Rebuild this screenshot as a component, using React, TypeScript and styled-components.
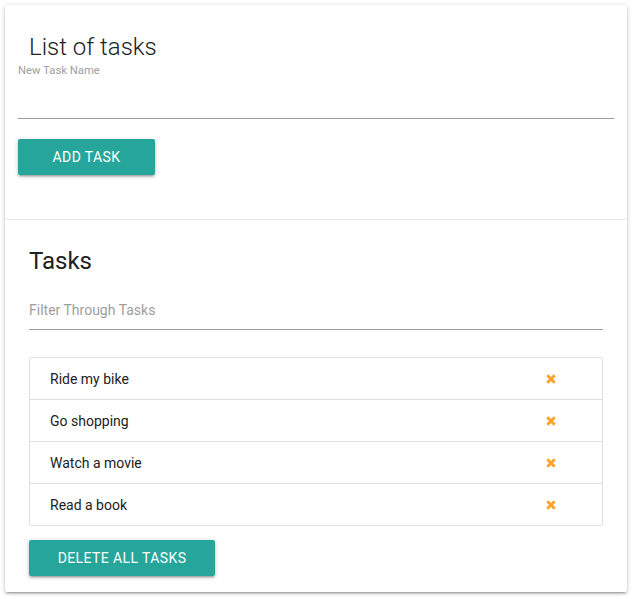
import React from "react";
import styled, { createGlobalStyle } from "styled-components";

const Global = createGlobalStyle`
  html, body { margin: 0; padding: 0; background: #fff; }
  body { font-family: Roboto, "Noto Sans", sans-serif; color: rgba(0,0,0,0.87); }
  * { box-sizing: border-box; }
`;

const Card = styled.div`
  width: 622px;
  margin: 5px;
  background: #fff;
  box-shadow: 0 2px 2px 0 rgba(0,0,0,0.14), 0 3px 1px -2px rgba(0,0,0,0.12), 0 1px 5px 0 rgba(0,0,0,0.2);
  border-radius: 2px;
`;

const TopSection = styled.div`
  padding: 26px 13px 44px 13px;
  display: flex;
  flex-direction: column;
  align-items: flex-start;
`;

const BottomSection = styled.div`
  border-top: 1px solid #e8e8e8;
  padding: 25px 24px 16px 24px;
  display: flex;
  flex-direction: column;
  align-items: flex-start;
`;

const Title = styled.h1<{ $light?: boolean; $indent?: number }>`
  margin: 0 0 0 ${(p) => p.$indent ?? 0}px;
  font-size: 24px;
  line-height: 32px;
  font-weight: ${(p) => (p.$light ? 300 : 400)};
  color: #212121;
`;

const Label = styled.label`
  font-size: 11.3px;
  line-height: 13px;
  color: #9e9e9e;
  margin-top: 1px;
`;

const Input = styled.input<{ $mt: number; $h: number }>`
  width: 100%;
  height: ${(p) => p.$h}px;
  margin-top: ${(p) => p.$mt}px;
  border: none;
  border-bottom: 1px solid #9e9e9e;
  outline: none;
  padding: 0;
  font-family: Roboto, sans-serif;
  font-size: 14px;
  color: #212121;
  background: transparent;
  &::placeholder { color: #9e9e9e; }
`;

const Button = styled.button<{ $w: number; $mt: number }>`
  width: ${(p) => p.$w}px;
  height: 36px;
  margin-top: ${(p) => p.$mt}px;
  border: none;
  border-radius: 2px;
  background: #26a69a;
  color: #fff;
  font-family: Roboto, sans-serif;
  font-size: 14px;
  letter-spacing: 0.4px;
  text-transform: uppercase;
  padding: 0;
  box-shadow: 0 2px 2px 0 rgba(0,0,0,0.14), 0 3px 1px -2px rgba(0,0,0,0.12), 0 1px 5px 0 rgba(0,0,0,0.2);
`;

const Collection = styled.ul`
  list-style: none;
  margin: 27px 0 0 0;
  padding: 0;
  width: 100%;
  border: 1px solid #e0e0e0;
  border-radius: 2px;
`;

const Item = styled.li`
  display: flex;
  align-items: center;
  justify-content: space-between;
  height: 42px;
  padding: 0 46px 0 20px;
  font-size: 14px;
  color: #212121;
  border-bottom: 1px solid #e0e0e0;
  &:last-child { border-bottom: none; height: 41px; }
`;

const Remove = () => (
  <svg width="10" height="10" viewBox="0 0 10 10">
    <path d="M1.3 1.3 L8.7 8.7 M8.7 1.3 L1.3 8.7" stroke="#ffa22e" strokeWidth="2.9" strokeLinecap="butt" />
  </svg>
);

const tasks = ["Ride my bike", "Go shopping", "Watch a movie", "Read a book"];

export default function App() {
  return (
    <>
      <Global />
      <Card>
        <TopSection>
          <Title $light $indent={11}>List of tasks</Title>
          <Label>New Task Name</Label>
          <Input $mt={1} $h={41} />
          <Button $w={137} $mt={20}>Add Task</Button>
        </TopSection>
        <BottomSection>
          <Title>Tasks</Title>
          <Input $mt={13} $h={40} placeholder="Filter Through Tasks" />
          <Collection>
            {tasks.map((t) => (
              <Item key={t}>
                <span>{t}</span>
                <Remove />
              </Item>
            ))}
          </Collection>
          <Button $w={186} $mt={14}>Delete All Tasks</Button>
        </BottomSection>
      </Card>
    </>
  );
}
